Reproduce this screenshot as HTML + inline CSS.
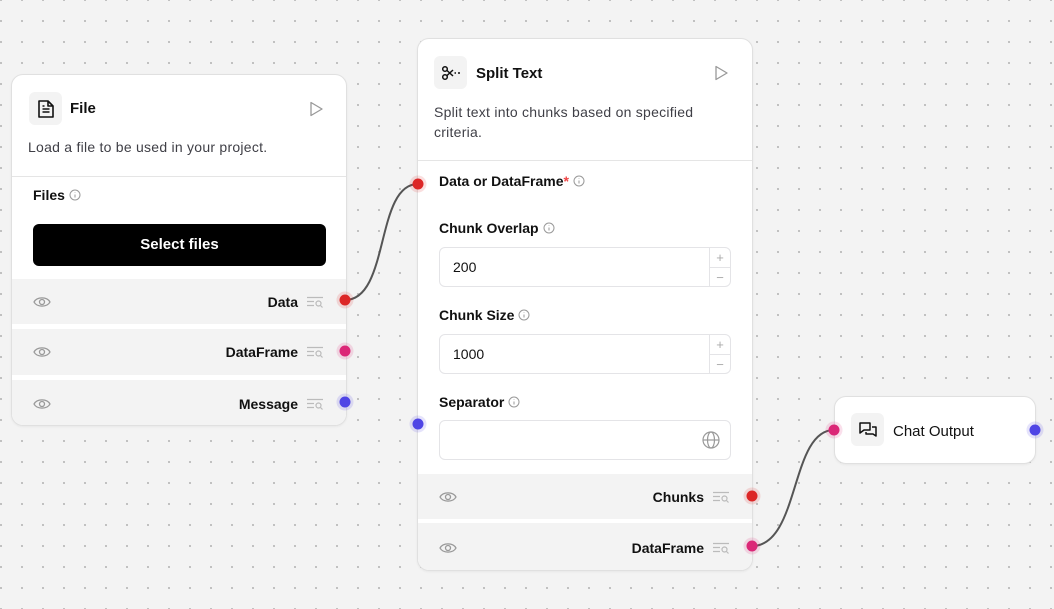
<!DOCTYPE html>
<html><head><meta charset="utf-8"><style>
*{box-sizing:border-box;margin:0;padding:0}
body{width:1054px;height:609px;overflow:hidden;position:relative;font-family:"Liberation Sans",sans-serif;color:#111;
background-color:#f3f3f3;background-image:radial-gradient(circle,#b4b4b4 0.9px,transparent 1.1px);background-size:21px 21px;background-position:-9.5px -10.5px}
.node{position:absolute;background:#fff;border:1px solid #e0e0e0;border-radius:12px;box-shadow:0 1px 2px rgba(0,0,0,.05)}
.ibox{position:absolute;width:33px;height:33px;background:#f3f3f3;border-radius:6px;display:flex;align-items:center;justify-content:center}
.title{position:absolute;font-size:15px;font-weight:bold}
.desc{position:absolute;font-size:14px;color:#3f3f46;line-height:20px;letter-spacing:0.25px}
.hr{position:absolute;left:0;right:0;height:1px;background:#e5e5e5}
.lbl{position:absolute;font-size:14px;font-weight:bold;color:#111}
.row{position:absolute;left:0;right:0;background:#f3f3f3}
.row .name{position:absolute;right:48px;top:50%;transform:translateY(-50%);font-size:14px;font-weight:bold}
.row .eye{position:absolute;left:21px;top:50%;transform:translateY(-50%)}
.row .lst{position:absolute;right:22px;top:50%;transform:translateY(-50%)}
.h{position:absolute;width:11px;height:11px;border-radius:50%;transform:translate(-50%,-50%)}
.h::after{content:"";position:absolute;left:-3px;top:-3px;right:-3px;bottom:-3px;border-radius:50%;background:inherit;opacity:.15}
.red{background:#dc2626}.pink{background:#db2777}.blue{background:#4f46e5}
.inp{position:absolute;left:21px;width:292px;height:40px;border:1px solid #e4e4e7;border-radius:6px;font-size:14px;padding-left:13px;line-height:38px}
.step{position:absolute;right:0;top:0;bottom:0;width:21px;border-left:1px solid #e4e4e7;color:#aaa;font-size:13px;text-align:center}
.step div{height:19px;line-height:19px}
.step div+div{border-top:1px solid #e4e4e7}
.info{display:inline-block;vertical-align:-1px;margin-left:4px}
.play{position:absolute}
</style></head><body>
<svg width="1054" height="609" style="position:absolute;left:0;top:0">
<path d="M345 300 C 390 300, 375 184, 418 184" stroke="#555" stroke-width="2" fill="none"/>
<path d="M752 546 C 800 546, 790 430, 834 430" stroke="#555" stroke-width="2" fill="none"/>
</svg>
<svg width="0" height="0" style="position:absolute"><defs>
<g id="eye"><path d="M1 7 C4 1.5 14 1.5 17 7 C14 12.5 4 12.5 1 7Z" fill="none" stroke="#999" stroke-width="1.3"/><circle cx="9" cy="7" r="2.5" fill="none" stroke="#999" stroke-width="1.3"/></g>
<g id="lst"><path d="M1 2h16M1 6h7M1 10h7" stroke="#bbb" stroke-width="1.2"/><circle cx="12.5" cy="8" r="2.5" fill="none" stroke="#bbb" stroke-width="1.2"/><path d="M14.5 10l2 2" stroke="#bbb" stroke-width="1.2"/></g>
<g id="inf"><circle cx="6" cy="6" r="5" fill="none" stroke="#999" stroke-width="1"/><path d="M6 5.5v3M6 3.5v.5" stroke="#999" stroke-width="1"/></g>
<g id="pl"><path d="M2 1.5 L13 8 L2 14.5Z" fill="none" stroke="#999" stroke-width="1.3" stroke-linejoin="round"/></g>
</defs></svg>

<!-- File node -->
<div class="node" style="left:11px;top:74px;width:336px;height:352px;overflow:hidden">
 <div class="ibox" style="left:17px;top:17px"><svg width="18" height="20" viewBox="0 0 18 20"><path d="M2 2h9l5 5v11H2Z M11 2v5h5" fill="none" stroke="#111" stroke-width="1.6" stroke-linejoin="round"/><path d="M5.5 10h7M5.5 13h7M5.5 7h2" stroke="#111" stroke-width="1.5"/></svg></div>
 <div class="title" style="left:58px;top:25px">File</div>
 <svg class="play" style="left:297px;top:26px" width="15" height="16"><use href="#pl"/></svg>
 <div class="desc" style="left:16px;top:62px">Load a file to be used in your project.</div>
 <div class="hr" style="top:101px"></div>
 <div class="lbl" style="left:21px;top:112px">Files<svg class="info" width="12" height="12"><use href="#inf"/></svg></div>
 <div style="position:absolute;left:21px;top:149px;width:293px;height:42px;background:#000;border-radius:6px;color:#fff;font-weight:bold;font-size:15px;text-align:center;line-height:42px">Select files</div>
 <div class="row" style="top:204px;height:45px"><svg class="eye" width="18" height="14"><use href="#eye"/></svg><span class="name">Data</span><svg class="lst" width="18" height="13"><use href="#lst"/></svg></div>
 <div class="row" style="top:254px;height:46px"><svg class="eye" width="18" height="14"><use href="#eye"/></svg><span class="name">DataFrame</span><svg class="lst" width="18" height="13"><use href="#lst"/></svg></div>
 <div class="row" style="top:305px;height:47px"><svg class="eye" width="18" height="14"><use href="#eye"/></svg><span class="name">Message</span><svg class="lst" width="18" height="13"><use href="#lst"/></svg></div>
</div>

<!-- Split Text node -->
<div class="node" style="left:417px;top:38px;width:336px;height:533px;overflow:hidden">
 <div class="ibox" style="left:16px;top:17px"><svg width="20" height="16" viewBox="0 0 20 16"><circle cx="4" cy="4" r="2.3" fill="none" stroke="#111" stroke-width="1.5"/><circle cx="4" cy="12" r="2.3" fill="none" stroke="#111" stroke-width="1.5"/><path d="M6 5.5L12 11M6 10.5L12 5" stroke="#111" stroke-width="1.5"/><path d="M13.5 8h1.5M17 8h2" stroke="#111" stroke-width="1.5"/></svg></div>
 <div class="title" style="left:58px;top:26px">Split Text</div>
 <svg class="play" style="left:296px;top:26px" width="15" height="16"><use href="#pl"/></svg>
 <div class="desc" style="left:16px;top:63px;width:285px">Split text into chunks based on specified criteria.</div>
 <div class="hr" style="top:121px"></div>
 <div class="lbl" style="left:21px;top:134px">Data or DataFrame<span style="color:#ef4444">*</span><svg class="info" width="12" height="12"><use href="#inf"/></svg></div>
 <div class="lbl" style="left:21px;top:181px">Chunk Overlap<svg class="info" width="12" height="12"><use href="#inf"/></svg></div>
 <div class="inp" style="top:208px">200<div class="step"><div>+</div><div>−</div></div></div>
 <div class="lbl" style="left:21px;top:268px">Chunk Size<svg class="info" width="12" height="12"><use href="#inf"/></svg></div>
 <div class="inp" style="top:295px">1000<div class="step"><div>+</div><div>−</div></div></div>
 <div class="lbl" style="left:21px;top:355px">Separator<svg class="info" width="12" height="12"><use href="#inf"/></svg></div>
 <div class="inp" style="top:381px"><svg style="position:absolute;right:10px;top:10px" width="18" height="18" viewBox="0 0 18 18"><circle cx="9" cy="9" r="8" fill="none" stroke="#999" stroke-width="1.2"/><ellipse cx="9" cy="9" rx="3.5" ry="8" fill="none" stroke="#999" stroke-width="1.2"/><path d="M1 9h16" stroke="#999" stroke-width="1.2"/></svg></div>
 <div class="row" style="top:435px;height:45px"><svg class="eye" width="18" height="14"><use href="#eye"/></svg><span class="name">Chunks</span><svg class="lst" width="18" height="13"><use href="#lst"/></svg></div>
 <div class="row" style="top:484px;height:49px"><svg class="eye" width="18" height="14"><use href="#eye"/></svg><span class="name">DataFrame</span><svg class="lst" width="18" height="13"><use href="#lst"/></svg></div>
</div>

<!-- Chat Output -->
<div class="node" style="left:834px;top:396px;width:202px;height:68px">
 <div class="ibox" style="left:16px;top:16px"><svg width="20" height="18" viewBox="0 0 20 18"><path d="M2 2h10v7H6l-4 3Z" fill="none" stroke="#111" stroke-width="1.5" stroke-linejoin="round"/><path d="M14 6h4v9l-3-2H8v-2" fill="none" stroke="#111" stroke-width="1.5" stroke-linejoin="round"/></svg></div>
 <div class="title" style="left:58px;top:26px;font-weight:normal;font-size:15px">Chat Output</div>
</div>

<div class="h red" style="left:345px;top:300px"></div>
<div class="h pink" style="left:345px;top:351px"></div>
<div class="h blue" style="left:345px;top:402px"></div>
<div class="h red" style="left:418px;top:184px"></div>
<div class="h blue" style="left:418px;top:424px"></div>
<div class="h red" style="left:752px;top:496px"></div>
<div class="h pink" style="left:752px;top:546px"></div>
<div class="h pink" style="left:834px;top:430px"></div>
<div class="h blue" style="left:1035px;top:430px"></div>
</body></html>
